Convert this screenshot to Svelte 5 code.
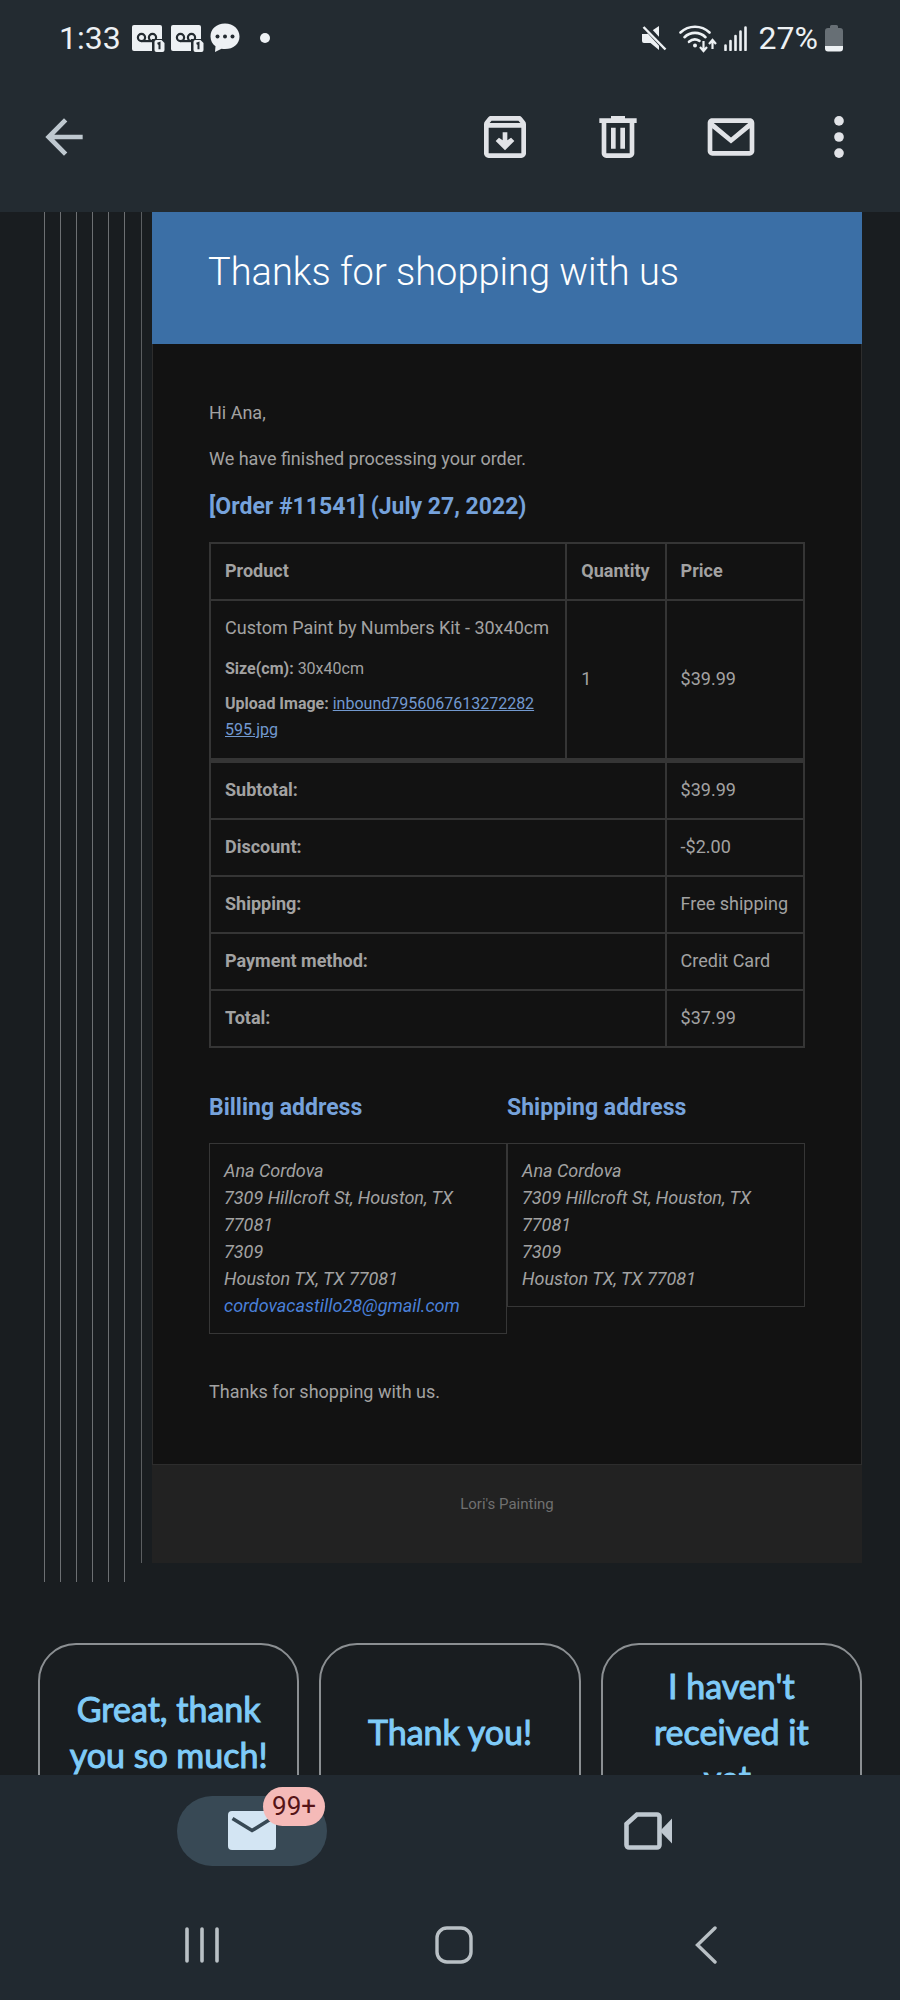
<script lang="ts">
  interface Address {
    title: string;
    lines: string[];
    email?: string;
  }

  let unread = "99+";
  let quoteDepth = 6;

  const totals = [
    { label: "Subtotal:", value: "$39.99" },
    { label: "Discount:", value: "-$2.00" },
    { label: "Shipping:", value: "Free shipping" },
    { label: "Payment method:", value: "Credit Card" },
    { label: "Total:", value: "$37.99" },
  ];

  const lines = ["Ana Cordova", "7309 Hillcroft St, Houston, TX 77081", "7309", "Houston TX, TX 77081"];

  const addresses: Address[] = [
    { title: "Billing address", lines, email: "cordovacastillo28@gmail.com" },
    { title: "Shipping address", lines },
  ];

  const replies = ["Great, thank you so much!", "Thank you!", "I haven't received it yet."];
</script>

{#snippet voicemail()}
  <svg width="33" height="27" viewBox="0 0 33 27">
    <rect width="30" height="26" rx="2" fill="#edf1f4" />
    <g fill="none" stroke="#232b31" stroke-width="2.2">
      <circle cx="9.5" cy="12.5" r="3.6" />
      <circle cx="20.5" cy="12.5" r="3.6" />
      <path d="M9.5 16.1h11" />
    </g>
    <path d="M20 14h13v13H20z" fill="#232b31" />
    <path d="M22.5 17a2 2 0 0 1 2-2h5l3 3v7a2 2 0 0 1-2 2h-6a2 2 0 0 1-2-2z" fill="#edf1f4" />
    <path d="M25.5 18.8l2-.8v6.300" fill="none" stroke="#232b31" stroke-width="2" />
  </svg>
{/snippet}

<!-- Each level of quoting adds one more line on the left -->
{#snippet quote(level: number)}
  <div class="quote">
    {#if level > 1}
      {@render quote(level - 1)}
    {:else}
      {@render email()}
    {/if}
  </div>
{/snippet}

{#snippet email()}
  <div class="inner">
    <article class="mail">
      <div class="mailHead">
        <h1>Thanks for shopping with us</h1>
      </div>
      <div class="mailBody">
        <p>Hi Ana,</p>
        <p>We have finished processing your order.</p>
        <h2>[Order #11541] (July 27, 2022)</h2>

        <table>
          <thead>
            <tr>
              <th scope="col">Product</th>
              <th class="fit" scope="col">Quantity</th>
              <th class="fit" scope="col">Price</th>
            </tr>
          </thead>
          <tbody>
            <tr>
              <td>
                Custom Paint by Numbers Kit - 30x40cm
                <ul class="meta">
                  <li><strong>Size(cm):</strong> 30x40cm</li>
                  <li><strong>Upload Image:</strong> <a href="#upload">inbound7956067613272282595.jpg</a></li>
                </ul>
              </td>
              <td>1</td>
              <td>$39.99</td>
            </tr>
          </tbody>
          <tfoot>
            {#each totals as row}
              <tr>
                <th colspan="2" scope="row">{row.label}</th>
                <td class="fit">{row.value}</td>
              </tr>
            {/each}
          </tfoot>
        </table>

        <div class="addresses">
          {#each addresses as item}
            <section>
              <h2>{item.title}</h2>
              <address>
                {#each item.lines as line}
                  <div>{line}</div>
                {/each}
                {#if item.email}
                  <a href="mailto:{item.email}">{item.email}</a>
                {/if}
              </address>
            </section>
          {/each}
        </div>

        <p class="closing">Thanks for shopping with us.</p>
      </div>
      <footer>Lori's Painting</footer>
    </article>
  </div>
{/snippet}

<div class="phone">
  <header>
    <div class="status">
      <span class="clock">1:33</span>
      <div class="notices">
        {@render voicemail()}
        {@render voicemail()}
        <svg width="30" height="30" viewBox="0 0 30 30">
          <path d="M15 .5C6.500.500.5 6 .5 13.500c0 4.500 2 7.500 5 9.800L5 29l6.500-3.200c1.100.2 2.300.3 3.500.3 8.500 0 14.500-5.300 14.500-12.600S23.500.5 15 .5z" fill="#edf1f4" />
          <g fill="#232b31">
            <circle cx="7.500" cy="13.500" r="2" />
            <circle cx="15" cy="13.500" r="2" />
            <circle cx="22.500" cy="13.500" r="2" />
          </g>
        </svg>
      </div>
      <span class="dot"></span>

      <div class="system">
        <svg width="26" height="26" viewBox="0 0 26 26">
          <path d="M1 9h5l12-8v24L9.500 18H3a2 2 0 0 1-2-2z" fill="#edf1f4" />
          <path d="M3.500.5l22 24" stroke="#232b31" stroke-width="6" />
          <path d="M2.500 2l22 22.500" stroke="#edf1f4" stroke-width="2.500" />
        </svg>
        <svg class="wifi" width="38" height="29" viewBox="0 0 38 29">
          <g fill="none" stroke="#edf1f4" stroke-width="2.600" stroke-linecap="round">
            <path d="M1.500 8.500a21 21 0 0 1 29 0" />
            <path d="M5.500 13.200a15 15 0 0 1 21 0" />
            <path d="M10 17.800a9 9 0 0 1 10.500-1" />
          </g>
          <circle cx="16" cy="21.500" r="2" fill="#edf1f4" />
          <g fill="none" stroke="#edf1f4" stroke-width="2.200">
            <path d="M24.500 17v10M21 23l3.500 4 3.500-4" />
            <path d="M33.500 25V16.500M30 20l3.500-4 3.500 4" />
          </g>
        </svg>
        <svg class="signal" width="23" height="25" viewBox="0 0 23 25">
          <path d="M1.500 19.500V24M6.500 15v9M11.500 10v14M16.500 5.500V24M21.500 1.500V24" stroke="#edf1f4" stroke-width="2.600" stroke-linecap="round" />
        </svg>
        <span class="percent">27%</span>
        <svg width="18" height="27" viewBox="0 0 18 27">
          <path d="M5 3V1.500A1.500 1.500 0 0 1 6.500 0h5A1.500 1.500 0 0 1 13 1.500V3h2a3 3 0 0 1 3 3v15H0V6a3 3 0 0 1 3-3z" fill="#676f75" />
          <path d="M0 21h18v2.500a3 3 0 0 1-3 3H3a3 3 0 0 1-3-3z" fill="#edf1f4" />
        </svg>
      </div>
    </div>

    <div class="toolbar">
      <button class="back" aria-label="Back">
        <svg width="56" height="56" viewBox="0 0 24 24" fill="#bec8cf">
          <path d="M20 11H7.830l5.590-5.590L12 4l-8 8 8 8 1.410-1.410L7.830 13H20z" />
        </svg>
      </button>
      <button aria-label="Archive">
        <svg width="56" height="56" viewBox="0 0 24 24" fill="#e1e3e7">
          <path d="M20.540 5.230l-1.390-1.680C18.880 3.210 18.470 3 18 3H6c-.47 0-.88.21-1.160.55L3.460 5.230C3.170 5.570 3 6.020 3 6.500V19c0 1.100.9 2 2 2h14c1.100 0 2-.9 2-2V6.500c0-.48-.17-.93-.46-1.270zM6.240 5h11.520l.83 1H5.420l.82-1zM5 19V8h14v11H5z" />
          <path d="M13 10h-2v3.400L9.400 12.300 8 13.700l4 4 4-4-1.400-1.400-1.600 1.100z" />
        </svg>
      </button>
      <button aria-label="Delete">
        <svg width="56" height="56" viewBox="0 0 24 24" fill="#e1e3e7">
          <path fill-rule="evenodd" d="M15 4V3H9v1H4v2h1v13c0 1.100.9 2 2 2h10c1.100 0 2-.9 2-2V6h1V4zm2 15H7V6h10zM9 8h2v9H9zm4 0h2v9h-2z" />
        </svg>
      </button>
      <button aria-label="Mark as unread">
        <svg width="56" height="56" viewBox="0 0 24 24" fill="#e1e3e7">
          <path fill-rule="evenodd" d="M4 4h16c1.100 0 2 .9 2 2v12c0 1.100-.9 2-2 2H4c-1.100 0-2-.9-2-2V6c0-1.100.9-2 2-2zm0 4.200V18h16V8.200l-8 6.600zM4.600 6L12 12.200 19.400 6z" />
        </svg>
      </button>
      <button aria-label="More options">
        <svg width="46" height="56" viewBox="2 0 20 24" fill="#e1e3e7">
          <circle cx="12" cy="5" r="2.100" />
          <circle cx="12" cy="12" r="2.100" />
          <circle cx="12" cy="19" r="2.100" />
        </svg>
      </button>
    </div>
  </header>

  <main>
    <div class="thread">
      {@render quote(quoteDepth)}
    </div>
    <div class="replies">
      {#each replies as reply}
        <button>{reply}</button>
      {/each}
    </div>
  </main>

  <nav class="tabs">
    <a href="#mail" aria-label="Mail">
      <span class="pill">
        <svg width="48" height="40" viewBox="0 0 48 40">
          <rect width="48" height="39" rx="4" fill="#d3e5f3" />
          <path d="M4.500 7.500L24 19.500l19.500-12" fill="none" stroke="#384955" stroke-width="3.600" />
        </svg>
        <span class="badge">{unread}</span>
      </span>
    </a>
    <a href="#meet" aria-label="Meet">
      <svg width="48" height="38" viewBox="0 0 48 38">
        <path d="M2.500 12L13 2.500h20a2.500 2.500 0 0 1 2.500 2.500v28a2.500 2.500 0 0 1-2.500 2.500H5A2.500 2.500 0 0 1 2.500 33z" fill="none" stroke="#bfc8d0" stroke-width="4.600" />
        <path d="M36 19L48 6.500v25z" fill="#bfc8d0" />
      </svg>
    </a>
  </nav>

  <nav class="keys">
    <button aria-label="Recent apps">
      <svg width="34" height="36" viewBox="0 0 34 36">
        <path d="M2 2v32M17 2v32M32 2v32" stroke="#b9c0c5" stroke-width="3.600" stroke-linecap="round" />
      </svg>
    </button>
    <button aria-label="Home">
      <svg width="38" height="38" viewBox="0 0 38 38">
        <rect x="2" y="2" width="34" height="34" rx="10" fill="none" stroke="#b9c0c5" stroke-width="3.400" />
      </svg>
    </button>
    <button aria-label="Go back">
      <svg width="22" height="38" viewBox="0 0 22 38">
        <path d="M20 2L2.500 19 20 36" fill="none" stroke="#b9c0c5" stroke-width="3.400" stroke-linecap="round" />
      </svg>
    </button>
  </nav>
</div>

<style>
  :global(body) {
    margin: 0;
    background: #191d20;
  }

  .phone {
    display: flex;
    flex-direction: column;
    height: 100vh;
    font-family: Roboto, sans-serif;
    background: #191d20;
    color: #a2a2a2;
  }

  svg {
    display: block;
    flex: none;
  }

  button {
    padding: 0;
    border: none;
    background: none;
    font-family: inherit;
    cursor: pointer;
  }

  header {
    background: #232b31;
  }

  .status {
    display: flex;
    align-items: center;
    height: 76px;
    padding: 0 57px 0 59px;
    color: #edf1f4;
    font-size: 32px;
    line-height: 40px;
  }

  .notices {
    display: flex;
    align-items: center;
    gap: 6px;
    margin-left: 11px;
  }

  .dot {
    width: 10px;
    height: 10px;
    margin-left: 20px;
    border-radius: 50%;
    background: #edf1f4;
  }

  .system {
    display: flex;
    align-items: center;
    margin-left: auto;
  }

  .wifi {
    margin-left: 12px;
  }

  .signal {
    margin: 0 12px 0 7px;
  }

  .percent {
    margin-right: 7px;
  }

  .toolbar {
    display: flex;
    align-items: center;
    gap: 57px;
    padding: 33px 38px 47px 36px;
  }

  .back {
    margin-right: auto;
  }

  main {
    flex: 1;
    min-height: 0;
    overflow-y: auto;
    scrollbar-width: none;
  }

  .thread {
    padding: 0 38px 0 44px;
  }

  .quote {
    padding-left: 15px;
    border-left: 1px solid #6d7073;
  }

  .quote:has(> .inner) {
    padding-bottom: 19px;
    padding-left: 16px;
  }

  .inner {
    padding-left: 10px;
    border-left: 1px solid #5b5e61;
  }

  .mail {
    background: #222;
  }

  .mailHead {
    padding: 38px 56px 50px;
    background: #3b6fa6;
  }

  h1 {
    margin: 0;
    color: #fff;
    font-size: 38px;
    font-weight: 300;
    line-height: 44px;
  }

  .mailBody {
    padding: 56px 56px 59px;
    border: 1px solid #2d2d2d;
    border-top: none;
    background: #121212;
    font-size: 18px;
    line-height: 26px;
  }

  p {
    margin: 0 0 20px;
  }

  h2 {
    margin: 0;
    color: #76a2db;
    font-size: 23px;
    font-weight: 700;
    line-height: 30px;
  }

  table {
    width: 100%;
    margin-top: 20px;
    border-collapse: collapse;
  }

  th,
  td {
    padding: 13px 15px 15px 14px;
    border: 2px solid #353535;
    text-align: left;
    vertical-align: middle;
    line-height: 27px;
  }

  .fit {
    width: 1%;
    white-space: nowrap;
  }

  tfoot tr:first-child > * {
    border-top-width: 5px;
  }

  .meta {
    margin: 15px 12px 0 0;
    padding: 0;
    list-style: none;
    font-size: 16px;
    line-height: 26px;
  }

  .meta li + li {
    margin-top: 9px;
  }

  .meta a {
    color: #7299cf;
    word-break: break-all;
  }

  .addresses {
    display: grid;
    grid-template-columns: 1fr 1fr;
    align-items: start;
    margin: 45px 0;
  }

  address {
    margin-top: 20px;
    padding: 13px 14px 14px;
    border: 1px solid #363636;
    line-height: 27px;
  }

  address a {
    color: #4a80d9;
    text-decoration: none;
  }

  .closing {
    margin-bottom: 0;
  }

  footer {
    padding: 27px 0 47px;
    color: #707070;
    font-size: 15px;
    line-height: 24px;
    text-align: center;
  }

  .replies {
    display: grid;
    grid-template-columns: repeat(3, 1fr);
    gap: 20px;
    padding: 61px 38px 24px;
  }

  .replies button {
    min-height: 182px;
    padding: 18px 20px 22px;
    border: 2px solid #8b8f92;
    border-radius: 38px;
    color: #7fcbf8;
    font-family: Lato, sans-serif;
    font-size: 34px;
    line-height: 46px;
    -webkit-text-stroke: 1px #7fcbf8;
  }

  .tabs {
    display: flex;
    padding: 21px 54px 22px;
    background: #212930;
  }

  .tabs a {
    display: flex;
    flex: 1;
    align-items: center;
    justify-content: center;
    height: 70px;
  }

  .pill {
    position: relative;
    display: flex;
    align-items: center;
    justify-content: center;
    width: 150px;
    height: 70px;
    border-radius: 35px;
    background: #384955;
  }

  .badge {
    position: absolute;
    top: -9px;
    right: 2px;
    padding: 0 9px;
    border-radius: 20px;
    background: #f5bab8;
    color: #561417;
    font-size: 26px;
    line-height: 39px;
  }

  .keys {
    display: flex;
    padding: 38px 68px 36px 76px;
    background: #212930;
  }

  .keys button {
    display: flex;
    flex: 1;
    align-items: center;
    justify-content: center;
    height: 38px;
  }
</style>
